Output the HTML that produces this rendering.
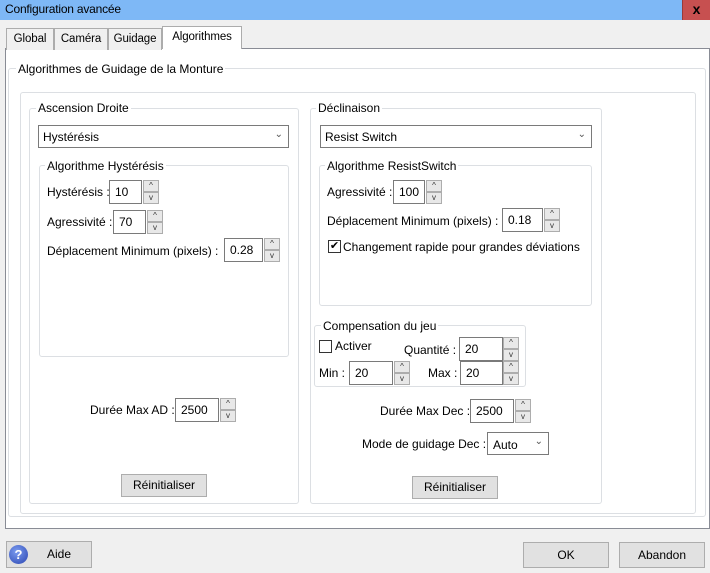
<!DOCTYPE html>
<html><head><meta charset="utf-8"><style>
*{box-sizing:border-box;margin:0;padding:0}
body{width:710px;height:573px;background:#f0f0f0;font-family:"Liberation Sans",sans-serif;font-size:12px;color:#000;position:relative;overflow:hidden}
.a{position:absolute;white-space:nowrap}
.title{left:0;top:0;width:710px;height:20px;background:#7eb8f6}
.close{left:682px;top:0;width:28px;height:20px;background:#c75050;border-left:1px solid #9a3a3a;text-align:center;font-weight:bold;font-size:14px;line-height:19px}
.tab{height:22px;border:1px solid #acacac;border-bottom:none;background:#f0f0f0;padding:4px 0 0 0;text-align:center;font-size:11.5px;letter-spacing:-0.1px}
.grp{border:1px solid #dcdfe3;border-radius:3px}
.lbl{background:#fff;padding:0 2px}
.in{background:#fff;border:1px solid #7a7a7a;padding:4px 0 0 5px;height:24px}
.sp{width:16px;height:24px}
.sp div{height:12px;border:1px solid #adadad;background:#e8e8e8;font-size:8px;text-align:center;line-height:10px;color:#333}
.cb{background:#fff;border:1px solid #7a7a7a;height:23px;padding:4px 0 0 4px}
.btn{background:#e1e1e1;border:1px solid #adadad;text-align:center;line-height:21px;height:23px}
.chk{width:13px;height:13px;border:1px solid #333;background:#fff}
</style></head><body>
<div class="a title"></div>
<div class="a" style="left:5px;top:2px;font-size:12px;letter-spacing:-0.2px">Configuration avancée</div>
<div class="a close">x</div>

<div class="a" style="left:5px;top:48px;width:705px;height:481px;background:#fff;border:1px solid #898c95"></div>
<div class="a tab" style="left:6px;top:28px;width:48px">Global</div>
<div class="a tab" style="left:54px;top:28px;width:54px">Caméra</div>
<div class="a tab" style="left:108px;top:28px;width:54px">Guidage</div>
<div class="a tab" style="left:162px;top:26px;width:80px;height:23px;background:#fff;padding-top:4px">Algorithmes</div>

<div class="a grp" style="left:8px;top:68px;width:698px;height:449px"></div>
<div class="a lbl" style="left:16px;top:62px">Algorithmes de Guidage de la Monture</div>
<div class="a grp" style="left:20px;top:92px;width:676px;height:422px"></div>

<!-- left -->
<div class="a grp" style="left:29px;top:108px;width:270px;height:396px"></div>
<div class="a lbl" style="left:36px;top:101px">Ascension Droite</div>
<div class="a cb" style="left:38px;top:125px;width:251px">Hystérésis<span style="position:absolute;right:5px;top:3px;font-size:10px;color:#555">&#8964;</span></div>
<div class="a grp" style="left:39px;top:165px;width:250px;height:192px"></div>
<div class="a lbl" style="left:45px;top:159px">Algorithme Hystérésis</div>
<div class="a" style="left:47px;top:185px">Hystérésis :</div>
<div class="a in" style="left:109px;top:180px;width:33px">10</div>
<div class="a sp" style="left:143px;top:180px"><div>^</div><div>v</div></div>
<div class="a" style="left:47px;top:215px">Agressivité :</div>
<div class="a in" style="left:113px;top:210px;width:33px">70</div>
<div class="a sp" style="left:147px;top:210px"><div>^</div><div>v</div></div>
<div class="a" style="left:47px;top:244px">Déplacement Minimum (pixels) :</div>
<div class="a in" style="left:224px;top:238px;width:39px">0.28</div>
<div class="a sp" style="left:264px;top:238px"><div>^</div><div>v</div></div>
<div class="a" style="left:90px;top:403px">Durée Max AD :</div>
<div class="a in" style="left:175px;top:398px;width:44px">2500</div>
<div class="a sp" style="left:220px;top:398px"><div>^</div><div>v</div></div>
<div class="a btn" style="left:121px;top:474px;width:86px">Réinitialiser</div>

<!-- right -->
<div class="a grp" style="left:310px;top:108px;width:292px;height:396px"></div>
<div class="a lbl" style="left:316px;top:101px">Déclinaison</div>
<div class="a cb" style="left:320px;top:125px;width:272px">Resist Switch<span style="position:absolute;right:5px;top:3px;font-size:10px;color:#555">&#8964;</span></div>
<div class="a grp" style="left:319px;top:165px;width:273px;height:141px"></div>
<div class="a lbl" style="left:325px;top:159px">Algorithme ResistSwitch</div>
<div class="a" style="left:327px;top:185px">Agressivité :</div>
<div class="a in" style="left:393px;top:180px;width:32px">100</div>
<div class="a sp" style="left:426px;top:180px"><div>^</div><div>v</div></div>
<div class="a" style="left:327px;top:214px">Déplacement Minimum (pixels) :</div>
<div class="a in" style="left:502px;top:208px;width:41px">0.18</div>
<div class="a sp" style="left:544px;top:208px"><div>^</div><div>v</div></div>
<div class="a chk" style="left:328px;top:240px;font-size:11px;line-height:11px;text-align:center">&#10004;</div>
<div class="a" style="left:343px;top:240px">Changement rapide pour grandes déviations</div>
<div class="a grp" style="left:314px;top:325px;width:212px;height:62px;background:#fff"></div>
<div class="a lbl" style="left:321px;top:319px">Compensation du jeu</div>
<div class="a chk" style="left:319px;top:340px"></div>
<div class="a" style="left:335px;top:339px">Activer</div>
<div class="a" style="left:404px;top:343px">Quantité :</div>
<div class="a in" style="left:459px;top:337px;width:44px">20</div>
<div class="a sp" style="left:503px;top:337px"><div>^</div><div>v</div></div>
<div class="a" style="left:319px;top:366px">Min :</div>
<div class="a in" style="left:349px;top:361px;width:44px">20</div>
<div class="a sp" style="left:394px;top:361px"><div>^</div><div>v</div></div>
<div class="a" style="left:428px;top:366px">Max :</div>
<div class="a in" style="left:460px;top:361px;width:43px">20</div>
<div class="a sp" style="left:503px;top:361px"><div>^</div><div>v</div></div>
<div class="a" style="left:380px;top:404px">Durée Max Dec :</div>
<div class="a in" style="left:470px;top:399px;width:44px">2500</div>
<div class="a sp" style="left:515px;top:399px"><div>^</div><div>v</div></div>
<div class="a" style="left:362px;top:437px">Mode de guidage Dec :</div>
<div class="a in" style="left:487px;top:432px;width:62px;height:23px;padding-top:5px">Auto<span style="position:absolute;right:5px;top:3px;font-size:10px;color:#555">&#8964;</span></div>
<div class="a btn" style="left:412px;top:476px;width:86px">Réinitialiser</div>

<!-- bottom -->
<div class="a btn" style="left:6px;top:541px;width:86px;height:27px;line-height:25px;padding-left:20px">Aide</div>
<div class="a" style="left:9px;top:545px;width:19px;height:19px;border-radius:50%;background:radial-gradient(circle at 40% 35%,#7b9cf0,#2a44b0);color:#fff;font-weight:bold;font-size:13px;text-align:center;line-height:19px">?</div>
<div class="a btn" style="left:523px;top:542px;width:86px;height:26px;line-height:24px">OK</div>
<div class="a btn" style="left:619px;top:542px;width:86px;height:26px;line-height:24px">Abandon</div>
</body></html>
